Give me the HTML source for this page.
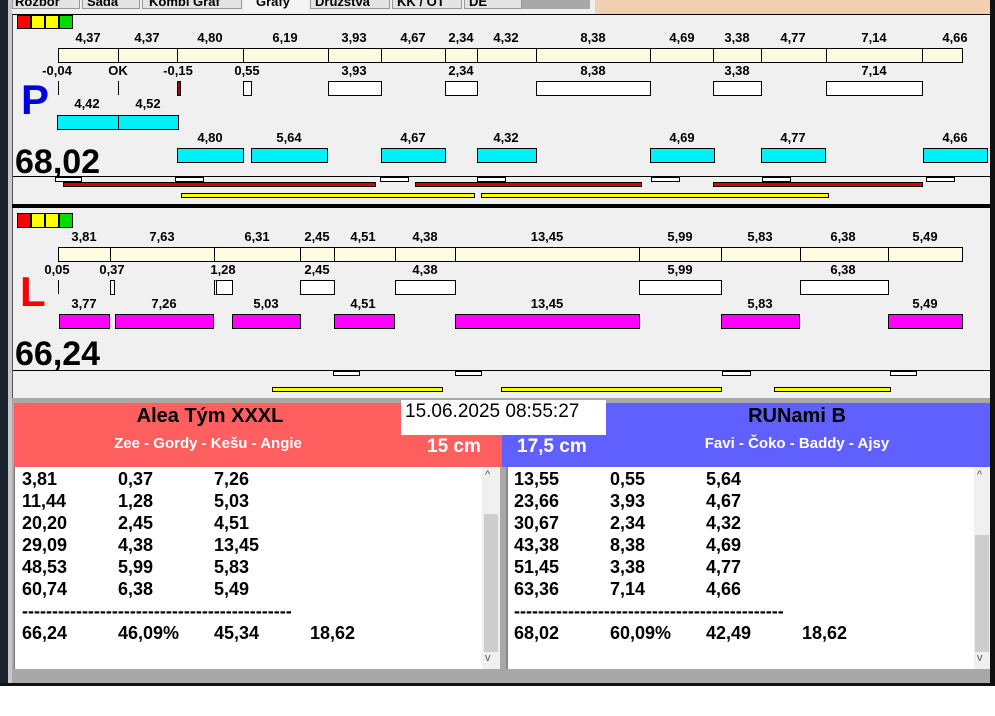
<!DOCTYPE html>
<html><head><meta charset="utf-8"><style>
*{margin:0;padding:0;box-sizing:border-box}
body{width:995px;height:716px;background:#fff;position:relative;overflow:hidden;font-family:"Liberation Sans",Arial,sans-serif}
div{position:absolute}
.l{font-weight:bold;font-size:13px;text-align:center;width:80px;line-height:14px;color:#000}
.c{background:#fdfbe0;border:1px solid #000}
.w{background:#fff;border:1px solid #000}
.cy{background:#00f0f8;border:1px solid #000}
.m{background:#ff00ff;border:1px solid #000}
.r{background:#dd0000;border:1px solid #000}
.y{background:#ffff00;border:1px solid #000}
.t{font-weight:bold;font-size:18px;line-height:22px;white-space:pre}
</style></head><body>
<div style="left:0;top:0;width:8px;height:686px;background:#1c2430"></div>
<div style="left:8px;top:0;width:4px;height:686px;background:#c8c8c8"></div>
<div style="left:12px;top:0;width:583px;height:14px;background:#f0f0f0"></div>
<div style="left:595px;top:0;width:395px;height:14px;background:#f0d0b0"></div>
<div style="left:12px;top:0;width:68px;height:9px;background:#e4e4e4;border:1px solid #999;border-top:0;font-size:13px;font-weight:bold;line-height:4px;overflow:hidden;padding-left:2px">Rozbor</div>
<div style="left:82px;top:0;width:58px;height:9px;background:#e4e4e4;border:1px solid #999;border-top:0;font-size:13px;font-weight:bold;line-height:4px;overflow:hidden;padding-left:4px">Sada</div>
<div style="left:142px;top:0;width:100px;height:9px;background:#e4e4e4;border:1px solid #999;border-top:0;font-size:13px;font-weight:bold;line-height:4px;overflow:hidden;padding-left:6px">Kombi Graf</div>
<div style="left:244px;top:0;width:64px;height:12px;background:#f4f4f4;font-size:13px;font-weight:bold;line-height:3px;overflow:hidden;padding-left:12px">Grafy</div>
<div style="left:310px;top:0;width:80px;height:9px;background:#e4e4e4;border:1px solid #999;border-top:0;font-size:13px;font-weight:bold;line-height:4px;overflow:hidden;padding-left:4px">Družstva</div>
<div style="left:392px;top:0;width:70px;height:9px;background:#e4e4e4;border:1px solid #999;border-top:0;font-size:13px;font-weight:bold;line-height:4px;overflow:hidden;padding-left:4px">KK / OT</div>
<div style="left:464px;top:0;width:58px;height:9px;background:#e4e4e4;border:1px solid #999;border-top:0;font-size:13px;font-weight:bold;line-height:4px;overflow:hidden;padding-left:4px">DE</div>
<div style="left:522px;top:0;width:68px;height:9px;background:#a8a8a8"></div>
<div style="left:990px;top:0;width:5px;height:686px;background:#111"></div>
<div style="left:12px;top:14px;width:978px;height:386px;background:#f0f0f0;border-top:1px solid #000;border-left:1px solid #555"></div>
<div style="left:17px;top:15px;width:14px;height:14px;background:#f00;border:1px solid #000"></div>
<div style="left:31px;top:15px;width:14px;height:14px;background:#ff0;border:1px solid #000"></div>
<div style="left:45px;top:15px;width:14px;height:14px;background:#ff0;border:1px solid #000"></div>
<div style="left:59px;top:15px;width:14px;height:14px;background:#0d0;border:1px solid #000"></div>

<div class="l" style="left:48px;top:31px">4,37</div><div class="l" style="left:107px;top:31px">4,37</div><div class="l" style="left:170px;top:31px">4,80</div><div class="l" style="left:245px;top:31px">6,19</div><div class="l" style="left:314px;top:31px">3,93</div><div class="l" style="left:373px;top:31px">4,67</div><div class="l" style="left:421px;top:31px">2,34</div><div class="l" style="left:466px;top:31px">4,32</div><div class="l" style="left:553px;top:31px">8,38</div><div class="l" style="left:642px;top:31px">4,69</div><div class="l" style="left:697px;top:31px">3,38</div><div class="l" style="left:753px;top:31px">4,77</div><div class="l" style="left:834px;top:31px">7,14</div><div class="l" style="left:915px;top:31px">4,66</div>
<div class="c" style="left:58px;top:48px;width:61px;height:15px"></div><div class="c" style="left:118px;top:48px;width:60px;height:15px"></div><div class="c" style="left:177px;top:48px;width:67px;height:15px"></div><div class="c" style="left:243px;top:48px;width:86px;height:15px"></div><div class="c" style="left:328px;top:48px;width:54px;height:15px"></div><div class="c" style="left:381px;top:48px;width:65px;height:15px"></div><div class="c" style="left:445px;top:48px;width:33px;height:15px"></div><div class="c" style="left:477px;top:48px;width:60px;height:15px"></div><div class="c" style="left:536px;top:48px;width:115px;height:15px"></div><div class="c" style="left:650px;top:48px;width:64px;height:15px"></div><div class="c" style="left:713px;top:48px;width:49px;height:15px"></div><div class="c" style="left:761px;top:48px;width:66px;height:15px"></div><div class="c" style="left:826px;top:48px;width:97px;height:15px"></div><div class="c" style="left:922px;top:48px;width:41px;height:15px"></div>

<div class="l" style="left:17px;top:64px">-0,04</div><div class="l" style="left:78px;top:64px">OK</div><div class="l" style="left:138px;top:64px">-0,15</div><div class="l" style="left:207px;top:64px">0,55</div><div class="l" style="left:314px;top:64px">3,93</div><div class="l" style="left:421px;top:64px">2,34</div><div class="l" style="left:553px;top:64px">8,38</div><div class="l" style="left:697px;top:64px">3,38</div><div class="l" style="left:834px;top:64px">7,14</div>
<div style="left:58px;top:81px;width:1px;height:14px;background:#000"></div><div style="left:118px;top:81px;width:1px;height:14px;background:#000"></div>
<div class="r" style="left:177px;top:81px;width:4px;height:15px;background:#a00"></div>
<div class="w" style="left:243px;top:81px;width:9px;height:15px"></div><div class="w" style="left:328px;top:81px;width:54px;height:15px"></div><div class="w" style="left:445px;top:81px;width:33px;height:15px"></div><div class="w" style="left:536px;top:81px;width:115px;height:15px"></div><div class="w" style="left:713px;top:81px;width:49px;height:15px"></div><div class="w" style="left:826px;top:81px;width:97px;height:15px"></div>
<div style="left:21px;top:76px;font-size:42px;font-weight:bold;color:#0000e0;line-height:48px">P</div>
<div class="l" style="left:47px;top:97px">4,42</div><div class="l" style="left:108px;top:97px">4,52</div>
<div class="cy" style="left:57px;top:115px;width:62px;height:15px"></div><div class="cy" style="left:118px;top:115px;width:61px;height:15px"></div>
<div class="l" style="left:170px;top:131px">4,80</div><div class="l" style="left:249px;top:131px">5,64</div><div class="l" style="left:373px;top:131px">4,67</div><div class="l" style="left:466px;top:131px">4,32</div><div class="l" style="left:642px;top:131px">4,69</div><div class="l" style="left:753px;top:131px">4,77</div><div class="l" style="left:915px;top:131px">4,66</div>
<div class="cy" style="left:177px;top:148px;width:67px;height:15px"></div><div class="cy" style="left:251px;top:148px;width:77px;height:15px"></div><div class="cy" style="left:381px;top:148px;width:65px;height:15px"></div><div class="cy" style="left:477px;top:148px;width:60px;height:15px"></div><div class="cy" style="left:650px;top:148px;width:65px;height:15px"></div><div class="cy" style="left:761px;top:148px;width:65px;height:15px"></div><div class="cy" style="left:923px;top:148px;width:65px;height:15px"></div>
<div style="left:15px;top:142px;font-size:34px;font-weight:bold;line-height:40px">68,02</div>
<div style="left:13px;top:176px;width:977px;height:1px;background:#000"></div>
<div class="w" style="left:55px;top:177px;width:27px;height:5px"></div><div class="w" style="left:175px;top:177px;width:29px;height:5px"></div><div class="w" style="left:380px;top:177px;width:29px;height:5px"></div><div class="w" style="left:477px;top:177px;width:29px;height:5px"></div><div class="w" style="left:651px;top:177px;width:29px;height:5px"></div><div class="w" style="left:762px;top:177px;width:29px;height:5px"></div><div class="w" style="left:926px;top:177px;width:29px;height:5px"></div>
<div class="r" style="left:63px;top:182px;width:313px;height:5px"></div><div class="r" style="left:415px;top:182px;width:227px;height:5px"></div><div class="r" style="left:713px;top:182px;width:210px;height:5px"></div>
<div class="y" style="left:181px;top:193px;width:294px;height:5px"></div><div class="y" style="left:481px;top:193px;width:348px;height:5px"></div>
<div style="left:12px;top:204px;width:978px;height:4px;background:#000"></div>

<div style="left:17px;top:213px;width:14px;height:15px;background:#f00;border:1px solid #000"></div>
<div style="left:31px;top:213px;width:14px;height:15px;background:#ff0;border:1px solid #000"></div>
<div style="left:45px;top:213px;width:14px;height:15px;background:#ff0;border:1px solid #000"></div>
<div style="left:59px;top:213px;width:14px;height:15px;background:#0d0;border:1px solid #000"></div>
<div class="l" style="left:44px;top:230px">3,81</div><div class="l" style="left:122px;top:230px">7,63</div><div class="l" style="left:217px;top:230px">6,31</div><div class="l" style="left:277px;top:230px">2,45</div><div class="l" style="left:323px;top:230px">4,51</div><div class="l" style="left:385px;top:230px">4,38</div><div class="l" style="left:507px;top:230px">13,45</div><div class="l" style="left:640px;top:230px">5,99</div><div class="l" style="left:720px;top:230px">5,83</div><div class="l" style="left:803px;top:230px">6,38</div><div class="l" style="left:885px;top:230px">5,49</div>
<div class="c" style="left:58px;top:247px;width:53px;height:15px"></div><div class="c" style="left:110px;top:247px;width:105px;height:15px"></div><div class="c" style="left:214px;top:247px;width:87px;height:15px"></div><div class="c" style="left:300px;top:247px;width:35px;height:15px"></div><div class="c" style="left:334px;top:247px;width:62px;height:15px"></div><div class="c" style="left:395px;top:247px;width:61px;height:15px"></div><div class="c" style="left:455px;top:247px;width:185px;height:15px"></div><div class="c" style="left:639px;top:247px;width:83px;height:15px"></div><div class="c" style="left:721px;top:247px;width:80px;height:15px"></div><div class="c" style="left:800px;top:247px;width:89px;height:15px"></div><div class="c" style="left:888px;top:247px;width:75px;height:15px"></div>
<div class="l" style="left:17px;top:263px;width:80px">0,05</div><div class="l" style="left:72px;top:263px">0,37</div><div class="l" style="left:183px;top:263px">1,28</div><div class="l" style="left:277px;top:263px">2,45</div><div class="l" style="left:385px;top:263px">4,38</div><div class="l" style="left:640px;top:263px">5,99</div><div class="l" style="left:803px;top:263px">6,38</div>
<div style="left:58px;top:280px;width:1px;height:14px;background:#000"></div>
<div class="w" style="left:110px;top:280px;width:5px;height:15px"></div><div class="w" style="left:214px;top:280px;width:19px;height:15px;border-left:3px double #000"></div><div class="w" style="left:300px;top:280px;width:35px;height:15px"></div><div class="w" style="left:395px;top:280px;width:61px;height:15px"></div><div class="w" style="left:639px;top:280px;width:83px;height:15px"></div><div class="w" style="left:800px;top:280px;width:89px;height:15px"></div>
<div style="left:20px;top:268px;font-size:42px;font-weight:bold;color:#f00;line-height:48px">L</div>
<div class="l" style="left:44px;top:297px">3,77</div><div class="l" style="left:124px;top:297px">7,26</div><div class="l" style="left:226px;top:297px">5,03</div><div class="l" style="left:323px;top:297px">4,51</div><div class="l" style="left:507px;top:297px">13,45</div><div class="l" style="left:720px;top:297px">5,83</div><div class="l" style="left:885px;top:297px">5,49</div>
<div class="m" style="left:59px;top:314px;width:51px;height:15px"></div><div class="m" style="left:115px;top:314px;width:99px;height:15px"></div><div class="m" style="left:232px;top:314px;width:69px;height:15px"></div><div class="m" style="left:334px;top:314px;width:61px;height:15px"></div><div class="m" style="left:455px;top:314px;width:185px;height:15px"></div><div class="m" style="left:721px;top:314px;width:79px;height:15px"></div><div class="m" style="left:888px;top:314px;width:75px;height:15px"></div>
<div style="left:15px;top:334px;font-size:34px;font-weight:bold;line-height:40px">66,24</div>
<div style="left:13px;top:370px;width:977px;height:1px;background:#000"></div>
<div class="w" style="left:333px;top:371px;width:27px;height:5px"></div><div class="w" style="left:455px;top:371px;width:27px;height:5px"></div><div class="w" style="left:722px;top:371px;width:29px;height:5px"></div><div class="w" style="left:890px;top:371px;width:27px;height:5px"></div>
<div class="y" style="left:272px;top:387px;width:171px;height:5px"></div><div class="y" style="left:501px;top:387px;width:221px;height:5px"></div><div class="y" style="left:774px;top:387px;width:117px;height:5px"></div>

<div style="left:12px;top:398px;width:978px;height:288px;background:#a8a8a8"></div>
<div style="left:14px;top:403px;width:488px;height:64px;background:#ff5f5f"></div>
<div style="left:502px;top:403px;width:488px;height:64px;background:#6060ff"></div>
<div style="left:401px;top:400px;width:205px;height:35px;background:#fff;font-size:19px;line-height:24px;padding-left:4px">15.06.2025 08:55:27</div>
<div style="left:60px;top:403px;width:300px;text-align:center;font-size:20px;font-weight:bold;line-height:26px">Alea Tým XXXL</div>
<div style="left:58px;top:434px;width:300px;text-align:center;font-size:15px;font-weight:bold;color:#fff;line-height:20px">Zee - Gordy - Kešu - Angie</div>
<div style="left:427px;top:436px;font-size:19px;font-weight:bold;color:#fff;line-height:22px">15 cm</div>
<div style="left:517px;top:436px;font-size:19px;font-weight:bold;color:#fff;line-height:22px">17,5 cm</div>
<div style="left:647px;top:403px;width:300px;text-align:center;font-size:20px;font-weight:bold;line-height:26px">RUNami B</div>
<div style="left:647px;top:434px;width:300px;text-align:center;font-size:15px;font-weight:bold;color:#fff;line-height:20px">Favi - Čoko - Baddy - Ajsy</div>

<div style="left:14px;top:467px;width:486px;height:202px;background:#fff;border-left:1px solid #777"></div>
<div style="left:482px;top:467px;width:18px;height:202px;background:#f0f0f0"></div>
<div style="left:484px;top:514px;width:14px;height:138px;background:#cdcdcd"></div>
<div style="left:485px;top:469px;font-size:11px;color:#555">^</div>
<div style="left:485px;top:652px;font-size:11px;color:#555">v</div>
<div style="left:506px;top:467px;width:484px;height:202px;background:#fff;border-left:2px solid #888"></div>
<div style="left:974px;top:467px;width:16px;height:202px;background:#f0f0f0"></div>
<div style="left:975px;top:535px;width:14px;height:117px;background:#cdcdcd"></div>
<div style="left:977px;top:469px;font-size:11px;color:#555">^</div>
<div style="left:977px;top:652px;font-size:11px;color:#555">v</div>

<div class="t" style="left:22px;top:468px">3,81
11,44
20,20
29,09
48,53
60,74</div>
<div class="t" style="left:118px;top:468px">0,37
1,28
2,45
4,38
5,99
6,38</div>
<div class="t" style="left:214px;top:468px">7,26
5,03
4,51
13,45
5,83
5,49</div>
<div class="t" style="left:22px;top:600px;width:272px;overflow:hidden">---------------------------------------------</div>
<div class="t" style="left:22px;top:622px">66,24</div><div class="t" style="left:118px;top:622px">46,09%</div><div class="t" style="left:214px;top:622px">45,34</div><div class="t" style="left:310px;top:622px">18,62</div>

<div class="t" style="left:514px;top:468px">13,55
23,66
30,67
43,38
51,45
63,36</div>
<div class="t" style="left:610px;top:468px">0,55
3,93
2,34
8,38
3,38
7,14</div>
<div class="t" style="left:706px;top:468px">5,64
4,67
4,32
4,69
4,77
4,66</div>
<div class="t" style="left:514px;top:600px;width:272px;overflow:hidden">---------------------------------------------</div>
<div class="t" style="left:514px;top:622px">68,02</div><div class="t" style="left:610px;top:622px">60,09%</div><div class="t" style="left:706px;top:622px">42,49</div><div class="t" style="left:802px;top:622px">18,62</div>

<div style="left:0;top:683px;width:995px;height:3px;background:#111"></div>
</body></html>
